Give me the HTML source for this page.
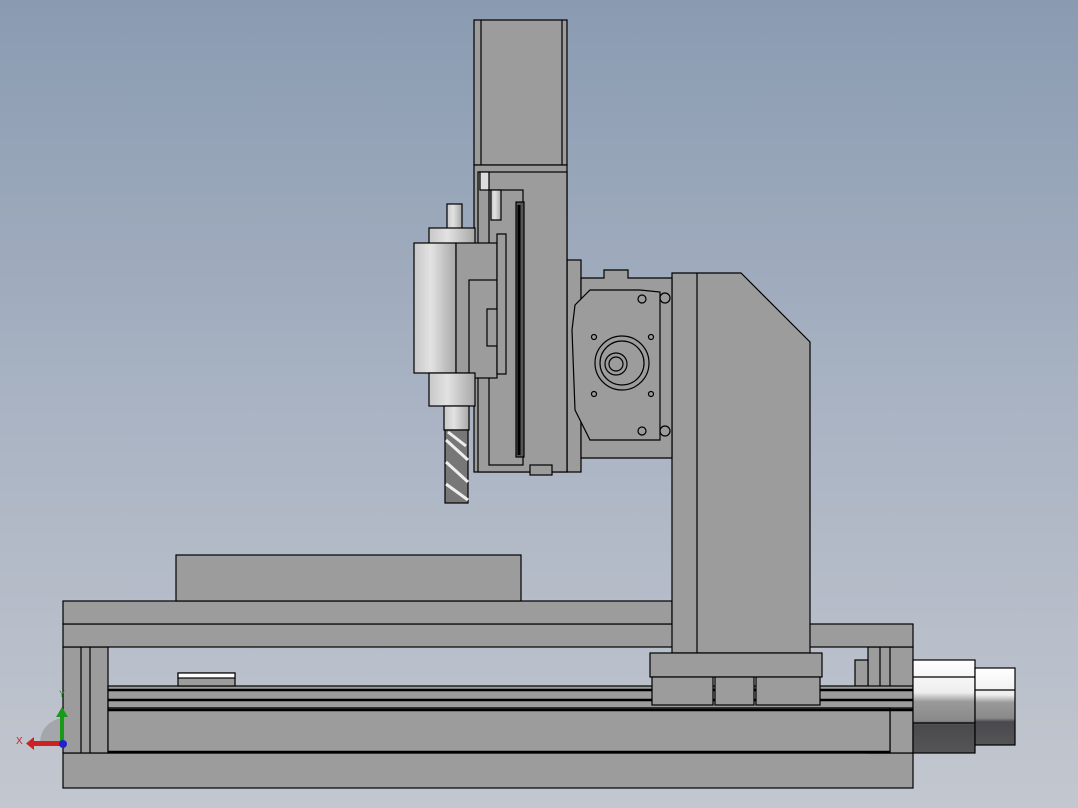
<!DOCTYPE html>
<html><head><meta charset="utf-8"><style>
html,body{margin:0;padding:0;width:1078px;height:808px;overflow:hidden}
body{background:linear-gradient(#8a9bb1 0%,#a9b3c3 50%,#c3c7cf 100%)}
svg{position:absolute;left:0;top:0}
</style></head><body>
<svg width="1078" height="808" viewBox="0 0 1078 808">
<defs>
<linearGradient id="cyl" x1="0" x2="1"><stop offset="0" stop-color="#c8c8c8"/><stop offset="0.4" stop-color="#e2e2e2"/><stop offset="1" stop-color="#a8a8a8"/></linearGradient>
<linearGradient id="mot" x1="0" y1="0" x2="0" y2="1"><stop offset="0" stop-color="#fff"/><stop offset="0.35" stop-color="#eee"/><stop offset="0.45" stop-color="#999"/><stop offset="0.65" stop-color="#8a8a8a"/><stop offset="0.7" stop-color="#4a4a4e"/><stop offset="1" stop-color="#555"/></linearGradient>
</defs>
<g stroke="#000" stroke-width="1.2" fill="#9c9c9c">
<!-- base -->
<rect x="63" y="753" width="850" height="35"/>
<rect x="63" y="647" width="45" height="106"/>
<line x1="81" y1="647" x2="81" y2="753"/><line x1="90" y1="647" x2="90" y2="753"/>
<rect x="868" y="647" width="45" height="106"/>
<line x1="880" y1="647" x2="880" y2="686"/><line x1="890" y1="647" x2="890" y2="753"/>
<rect x="855" y="660" width="13" height="26"/>
<rect x="108" y="686" width="805" height="22"/>
<rect x="108" y="708" width="782" height="45"/>
<line x1="108" y1="690" x2="913" y2="690" stroke-width="2.5"/>
<line x1="108" y1="700" x2="913" y2="700" stroke-width="2.5"/>
<line x1="108" y1="710" x2="913" y2="710" stroke-width="2.5"/>
<line x1="108" y1="752" x2="890" y2="752" stroke-width="2.5"/>
<rect x="178" y="673" width="57" height="13" fill="#9c9c9c"/>
<rect x="178" y="673" width="57" height="5" fill="#fff"/>
<!-- rail plates -->
<rect x="63" y="624" width="850" height="23"/>
<rect x="63" y="601" width="609" height="23"/>
<rect x="176" y="555" width="345" height="46"/>
<!-- motor X -->
<rect x="913" y="660" width="62" height="93" fill="url(#mot)"/>
<rect x="975" y="668" width="40" height="77" fill="url(#mot)"/>
<line x1="913" y1="677" x2="975" y2="677"/><line x1="913" y1="723" x2="975" y2="723"/><line x1="975" y1="690" x2="1015" y2="690"/>
<!-- column -->
<polygon points="672,273 741,273 810,342 810,653 672,653"/>
<line x1="697" y1="273" x2="697" y2="653"/>
<rect x="650" y="653" width="172" height="24"/>
<rect x="652" y="677" width="61" height="28"/>
<rect x="756" y="677" width="64" height="28"/>
<rect x="715" y="677" width="39" height="28"/>
<!-- mount block -->
<rect x="567" y="260" width="14" height="212"/>
<path d="M581,278 L604,278 L604,270 L628,270 L628,278 L672,278 L672,458 L581,458 Z"/>
<path d="M590,290 L640,290 L660,292 L660,440 L590,440 L575,410 L572,330 L575,305 Z"/>
<circle cx="622" cy="363" r="27" fill="none"/>
<circle cx="622" cy="363" r="22" fill="none"/>
<circle cx="616" cy="364" r="11" fill="none"/>
<circle cx="616" cy="364" r="7" fill="none"/>
<circle cx="594" cy="337" r="2.5" fill="none"/><circle cx="651" cy="337" r="2.5" fill="none"/>
<circle cx="594" cy="394" r="2.5" fill="none"/><circle cx="651" cy="394" r="2.5" fill="none"/>
<circle cx="642" cy="299" r="4" fill="none"/><circle cx="642" cy="431" r="4" fill="none"/>
<circle cx="665" cy="298" r="5" fill="none"/><circle cx="665" cy="431" r="5" fill="none"/>
<!-- Z axis -->
<rect x="474" y="20" width="93" height="145"/>
<line x1="481" y1="20" x2="481" y2="165"/><line x1="562" y1="20" x2="562" y2="165"/>
<rect x="474" y="165" width="93" height="307"/>
<rect x="478" y="172" width="89" height="300"/>
<rect x="480" y="172" width="9" height="18" fill="#ddd"/>
<rect x="489" y="190" width="34" height="275"/>
<rect x="516" y="202" width="8" height="255" fill="#555"/>
<line x1="519" y1="205" x2="519" y2="455" stroke="#000" stroke-width="3"/>
<rect x="491" y="190" width="10" height="30" fill="url(#cyl)"/>
<rect x="530" y="465" width="22" height="10"/>
<!-- spindle -->
<rect x="447" y="204" width="15" height="27" fill="url(#cyl)"/>
<rect x="429" y="228" width="46" height="18" fill="url(#cyl)"/>
<rect x="414" y="243" width="42" height="130" fill="url(#cyl)"/>
<rect x="456" y="243" width="41" height="130"/>
<rect x="469" y="280" width="28" height="98"/>
<rect x="487" y="309" width="12" height="37"/>
<rect x="497" y="234" width="9" height="140"/>
<rect x="429" y="373" width="46" height="33" fill="url(#cyl)"/>
<rect x="444" y="406" width="25" height="24" fill="url(#cyl)"/>
<rect x="445" y="430" width="23" height="73" fill="#777"/>
<path d="M446,440 L468,460 M446,462 L468,482 M446,484 L468,500 M448,432 L466,446" stroke="#eee" stroke-width="3" fill="none"/>
</g>
<!-- axis triad -->
<path d="M40,742 A25,25 0 0 1 62,718 L62,742 Z" fill="#8a8a8a" opacity="0.5"/>
<rect x="60" y="715" width="4" height="28" fill="#1a9a1a"/>
<polygon points="56,717 62,707 68,717" fill="#1a9a1a"/>
<rect x="34" y="741" width="28" height="5" fill="#c22"/>
<polygon points="34,737 26,743.5 34,750" fill="#c22"/>
<circle cx="63" cy="744" r="4" fill="#22c"/>
<text x="16" y="744" font-family="Liberation Sans,sans-serif" font-size="10" fill="#c22">X</text>
<text x="59" y="697" font-family="Liberation Sans,sans-serif" font-size="9" fill="#1a9a1a">Y</text>
</svg>
</body></html>
